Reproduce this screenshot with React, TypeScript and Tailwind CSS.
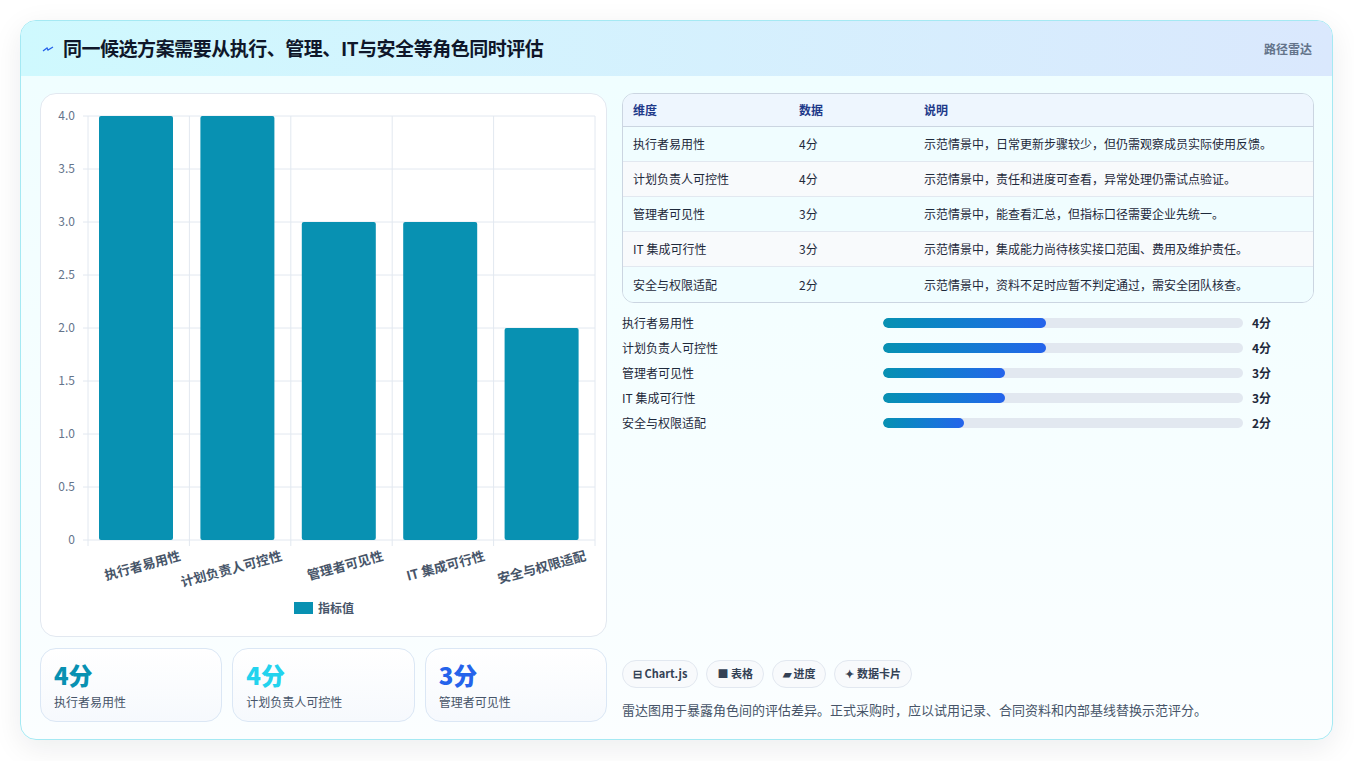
import React from 'react';

const rows = [
  { name: '执行者易用性', score: 4, note: '示范情景中，日常更新步骤较少，但仍需观察成员实际使用反馈。' },
  { name: '计划负责人可控性', score: 4, note: '示范情景中，责任和进度可查看，异常处理仍需试点验证。' },
  { name: '管理者可见性', score: 3, note: '示范情景中，能查看汇总，但指标口径需要企业先统一。' },
  { name: 'IT 集成可行性', score: 3, note: '示范情景中，集成能力尚待核实接口范围、费用及维护责任。' },
  { name: '安全与权限适配', score: 2, note: '示范情景中，资料不足时应暂不判定通过，需安全团队核查。' },
];

const font = { fontFamily: '"Noto Sans CJK SC", "Noto Sans", sans-serif' };

function BarChart() {
  // plot: x 47..554, y 22 (4.0) .. 446 (0), card-relative
  const top = 22;
  const bottom = 446;
  const left = 47;
  const colW = 101.4;
  const yFor = (v: number) => bottom - (v / 4) * (bottom - top);
  const ticks = [0, 0.5, 1, 1.5, 2, 2.5, 3, 3.5, 4];
  return (
    <svg width="566" height="543" className="block" style={font}>
      {ticks.map((t) => (
        <g key={t}>
          <line x1={left - 5} x2={554} y1={yFor(t)} y2={yFor(t)} stroke="#e2e8f0" />
          <text x={left - 13} y={yFor(t) + 4} fontSize="12" fill="#64748b" textAnchor="end">
            {t === 0 ? '0' : t.toFixed(1)}
          </text>
        </g>
      ))}
      {[0, 1, 2, 3, 4, 5].map((i) => (
        <line key={i} x1={left + i * colW} x2={left + i * colW} y1={top} y2={bottom + 6} stroke="#e2e8f0" />
      ))}
      {rows.map((r, i) => (
        <g key={r.name}>
          <rect x={left + i * colW + 11} y={yFor(r.score)} width={74} height={bottom - yFor(r.score)} rx="2" fill="#0891b2" />
          <text
            fontSize="13"
            fontWeight="600"
            fill="#475569"
            textAnchor="end"
            transform={`translate(${left + i * colW + colW * 0.95 - 3} ${bottom + 20}) rotate(-15)`}
          >
            {r.name}
          </text>
        </g>
      ))}
      <rect x={253} y={508} width={19} height={12} fill="#0891b2" />
      <text x={277} y={519} fontSize="12" fontWeight="600" fill="#475569">指标值</text>
    </svg>
  );
}

const stats = [
  { v: '4分', label: '执行者易用性', color: 'text-[#0891b2]' },
  { v: '4分', label: '计划负责人可控性', color: 'text-[#22d3ee]' },
  { v: '3分', label: '管理者可见性', color: 'text-[#2563eb]' },
];

const widths = ['163px', '163px', '122px', '122px', '81px'];

export default function App() {
  return (
    <div className="w-[1354px] h-[761px] bg-white pt-[20px] pl-[20px]" style={font}>
      <div className="w-[1313px] h-[720px] rounded-2xl border border-[#a5e9f3] shadow-[0_8px_30px_rgba(15,23,42,0.08)] overflow-hidden flex flex-col bg-gradient-to-b from-[#effeff] to-[#fbfeff]">
        <div className="h-[55px] shrink-0 flex items-center justify-between pl-[21px] pr-[20px] bg-gradient-to-r from-[#cff9fe] to-[#dae8fd]">
          <div className="flex items-center gap-[9px]">
            <svg width="12" height="10" viewBox="0 0 12 10">
              <path d="M1 7 L5 4 L6 6 L11 3" stroke="#2563eb" strokeWidth="1.3" fill="none" />
            </svg>
            <h1 className="text-[19px] font-bold text-[#0f172a] tracking-tight">同一候选方案需要从执行、管理、IT与安全等角色同时评估</h1>
          </div>
          <span className="text-[12px] font-semibold text-[#64748b]">路径雷达</span>
        </div>
        <div className="flex flex-1 pt-[17px] pl-[19px] pr-[18px] gap-[15px]">
          <div className="w-[567px] flex flex-col gap-[11px]">
            <div className="h-[544px] rounded-2xl border border-[#e2e8f0] bg-white overflow-hidden">
              <BarChart />
            </div>
            <div className="grid grid-cols-3 gap-[10px]">
              {stats.map((s) => (
                <div key={s.label} className="h-[74px] rounded-2xl border border-[#dbe7f5] bg-gradient-to-b from-white to-[#f6f9fd] px-[13px] pt-[11px]">
                  <div className={`text-[24px] leading-[30px] font-extrabold ${s.color}`}>{s.v}</div>
                  <div className="text-[12px] text-[#475569] mt-[3px]">{s.label}</div>
                </div>
              ))}
            </div>
          </div>
          <div className="flex-1 flex flex-col">
            <div className="rounded-xl border border-[#cbd5e1] overflow-hidden text-[12px]">
              <div className="h-[33px] flex items-center bg-[#eef6fe] border-b border-[#cbd5e1] text-[#1e3a8a] font-semibold">
                <div className="w-[176px] pl-[10px]">维度</div>
                <div className="w-[125px]">数据</div>
                <div>说明</div>
              </div>
              {rows.map((r, i) => (
                <div key={r.name} className={`h-[35px] flex items-center text-[#1e293b] ${i < 4 ? 'border-b border-[#e2e8f0]' : ''} ${i % 2 === 0 ? 'bg-[#f0fdff]' : 'bg-[#f8fafc]'}`}>
                  <div className="w-[176px] pl-[10px]">{r.name}</div>
                  <div className="w-[125px]">{r.score}分</div>
                  <div>{r.note}</div>
                </div>
              ))}
            </div>
            <div className="flex flex-col gap-[7px] mt-[11px]">
              {rows.map((r, i) => (
                <div key={r.name} className="h-[18px] flex items-center text-[12px] text-[#1e293b]">
                  <div className="w-[261px]">{r.name}</div>
                  <div className="w-[360px] h-[10px] rounded-full bg-[#e2e8f0] overflow-hidden">
                    <div className="h-full rounded-full bg-gradient-to-r from-[#0891b2] to-[#2563eb]" style={{ width: widths[i] }} />
                  </div>
                  <div className="ml-[9px] font-bold">{r.score}分</div>
                </div>
              ))}
            </div>
            <div className="flex-1" />
            <div className="flex gap-[8px] text-[11px] font-bold text-[#334155]">
              <span className="h-[28px] px-[10px] flex items-center rounded-full border border-[#e2e8f0] bg-[#f8fafc]">⊟ Chart.js</span>
              <span className="h-[28px] px-[10px] flex items-center rounded-full border border-[#e2e8f0] bg-[#f8fafc]">■ 表格</span>
              <span className="h-[28px] px-[10px] flex items-center rounded-full border border-[#e2e8f0] bg-[#f8fafc]">▰ 进度</span>
              <span className="h-[28px] px-[10px] flex items-center rounded-full border border-[#e2e8f0] bg-[#f8fafc]">✦ 数据卡片</span>
            </div>
            <p className="text-[13px] text-[#475569] mt-[12px] mb-[20px]">雷达图用于暴露角色间的评估差异。正式采购时，应以试用记录、合同资料和内部基线替换示范评分。</p>
          </div>
        </div>
      </div>
    </div>
  );
}
